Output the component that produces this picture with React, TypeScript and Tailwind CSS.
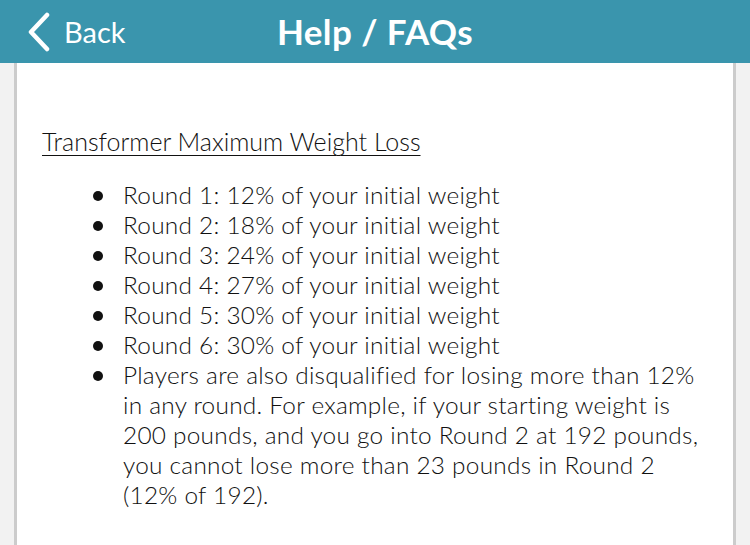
import React from "react";

const rounds = [
  "Round 1: 12% of your initial weight",
  "Round 2: 18% of your initial weight",
  "Round 3: 24% of your initial weight",
  "Round 4: 27% of your initial weight",
  "Round 5: 30% of your initial weight",
  "Round 6: 30% of your initial weight",
];

const note = [
  "Players are also disqualified for losing more than 12%",
  "in any round. For example, if your starting weight is",
  "200 pounds, and you go into Round 2 at 192 pounds,",
  "you cannot lose more than 23 pounds in Round 2",
  "(12% of 192).",
];

function Bullet({ children }: { children: React.ReactNode }) {
  return (
    <li className="relative pl-[30px] text-[24.4px] leading-[30px] tracking-[0.25px]">
      <span className="absolute left-0 top-[11px] h-[10px] w-[10px] rounded-full bg-[#111]" />
      {children}
    </li>
  );
}

export default function App() {
  return (
    <div
      className="flex h-[545px] w-[750px] flex-col overflow-hidden bg-[#f2f2f2]"
      style={{ fontFamily: "Lato, 'Open Sans', sans-serif" }}
    >
      <header className="relative flex h-[63px] shrink-0 items-center justify-center bg-[#3a95ad] text-white">
        <div className="absolute left-[26px] top-0 flex h-full items-center gap-[14px]">
          <svg width="24" height="40" viewBox="0 0 24 40" fill="none">
            <path d="M21 3 L5 20 L21 37" stroke="white" strokeWidth="4.5" strokeLinecap="round" strokeLinejoin="round" />
          </svg>
          <span className="text-[29px] leading-none">Back</span>
        </div>
        <h1 className="text-[35px] font-bold leading-none tracking-[0.4px]">Help / FAQs</h1>
      </header>
      <main className="mx-[14px] flex-1 border-x-[3px] border-[#cccccc] bg-white pl-[25px] pt-[63px] font-light text-[#111]">
        <h2 className="text-[25px] leading-[30px] underline decoration-1 underline-offset-[4px]">
          Transformer Maximum Weight Loss
        </h2>
        <ul className="mt-[24px] pl-[51px] pr-[14px]">
          {rounds.map((r) => (
            <Bullet key={r}>{r}</Bullet>
          ))}
          <Bullet>
            {note.map((line, i) => (
              <React.Fragment key={i}>
                {line}
                {i < note.length - 1 && <br />}
              </React.Fragment>
            ))}
          </Bullet>
        </ul>
      </main>
    </div>
  );
}
